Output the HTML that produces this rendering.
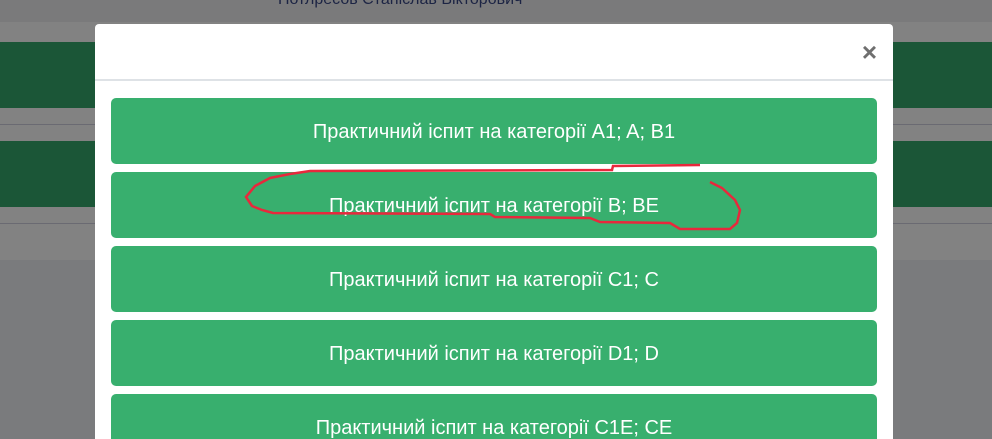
<!DOCTYPE html>
<html style="width:992px;height:439px;overflow:hidden"><head><meta charset="utf-8"><style>
*{margin:0;padding:0;box-sizing:border-box}
body{width:992px;height:439px;overflow:hidden;background:#7a7b7d;position:relative;font-family:"Liberation Sans",sans-serif}
.b{position:absolute;left:0;width:992px}
.modal{position:absolute;left:95px;top:24px;width:798px;height:415px;background:#fff;border-radius:4px 4px 0 0;overflow:hidden}
.hdr{height:57px;border-bottom:2px solid #dee2e6;position:relative}
.x{position:absolute;right:16px;top:13px;font-size:26px;font-weight:bold;color:#6f6f6f}
.btn{position:absolute;left:16px;width:766px;height:66px;background:#38af6e;border-radius:5px;color:#fff;font-size:20px;text-align:center;line-height:68px}
</style></head><body>
<div class="b" style="top:0;height:22px;background:#7a7a7b"></div>
<div class="b" style="top:22px;height:20px;background:#828282"></div>
<div style="position:absolute;left:278px;top:-9px;font-size:16px;color:#1c2444">Потлресов Станіслав Вікторович</div>
<div class="b" style="top:42px;height:66px;background:#1b5637"></div>
<div class="b" style="top:108px;height:33px;background:#828282"></div>
<div class="b" style="top:124px;height:1px;background:#6a6a72"></div>
<div class="b" style="top:141px;height:66px;background:#1b5637"></div>
<div class="b" style="top:207px;height:53px;background:#828282"></div>
<div class="b" style="top:223px;height:1px;background:#6a6a72"></div>
<div class="modal">
<div class="hdr"><span class="x">×</span></div>
<div class="btn" style="top:74px">Практичний іспит на категорії A1; A; B1</div>
<div class="btn" style="top:148px">Практичний іспит на категорії B; BE</div>
<div class="btn" style="top:222px">Практичний іспит на категорії C1; C</div>
<div class="btn" style="top:296px">Практичний іспит на категорії D1; D</div>
<div class="btn" style="top:370px">Практичний іспит на категорії C1E; CE</div>
</div>
<svg style="position:absolute;left:0;top:0" width="992" height="439"><path d="M700 165 L613 166 L612 170 L310 171 L290 174 L270 178 L255 186 L246 197 L252 206 L262 210 L273 213 L490 214 L495 217 L590 218 L600 222 L670 223 L680 229 L730 229 L737 223 L740 210 L735 200 L722 188 L710 182" fill="none" stroke="#e8283c" stroke-width="2.5"/></svg>
</body></html>
